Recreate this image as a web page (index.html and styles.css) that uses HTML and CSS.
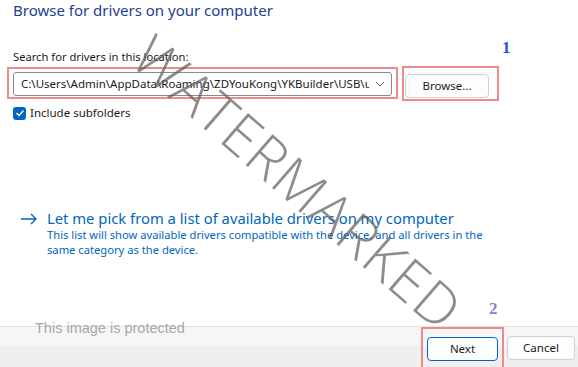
FILE: index.html
```html
<!DOCTYPE html>
<html>
<head>
<meta charset="utf-8">
<link rel="stylesheet" href="styles.css">
</head>
<body>
<div class="page">
  <div class="main">
    <h1 class="title">Browse for drivers on your computer</h1>
    <div class="label">Search for drivers in this location:</div>
    <div class="row">
      <div class="mark mark-combo">
        <div class="combo">
          <span class="combo-text">C:\Users\Admin\AppData\Roaming\ZDYouKong\YKBuilder\USB\u</span>
          <svg class="chev" width="10" height="6" viewBox="0 0 10 6"><path d="M1 1 L5 5 L9 1" fill="none" stroke="#555" stroke-width="1"/></svg>
        </div>
      </div>
      <div class="mark mark-browse">
        <button class="btn browse">Browse...</button>
      </div>
      <span class="num num1">1</span>
    </div>
    <label class="check">
      <span class="box"><svg width="10" height="8" viewBox="0 0 10 8"><path d="M1.5 4 L4 6.5 L8.5 1.5" fill="none" stroke="#fff" stroke-width="1.3"/></svg></span>
      <span>Include subfolders</span>
    </label>
    <div class="pick">
      <svg class="arrow" width="18" height="12" viewBox="0 0 18 12"><path d="M1 6 H16 M11 1 L16 6 L11 11" fill="none" stroke="#0067c0" stroke-width="1.4"/></svg>
      <div class="pick-text">
        <div class="pick-title">Let me pick from a list of available drivers on my computer</div>
        <div class="pick-desc">This list will show available drivers compatible with the device, and all drivers in the same category as the device.</div>
      </div>
    </div>
  </div>
  <div class="footer">
    <span class="protected">This image is protected</span>
    <div class="buttons">
      <div class="mark mark-next"><button class="btn next">Next</button></div>
      <button class="btn cancel">Cancel</button>
    </div>
    <span class="num num2">2</span>
  </div>
  <div class="watermark">WATERMARKED</div>
</div>
</body>
</html>
```
FILE: styles.css
```css
* { box-sizing: border-box; }
html, body { margin: 0; padding: 0; }
body {
  width: 578px;
  height: 367px;
  overflow: hidden;
  background: #fff;
  font-family: "Noto Sans", "Open Sans", sans-serif;
  color: #1a1a1a;
}
.page {
  position: relative;
  width: 578px;
  height: 367px;
  display: flex;
  flex-direction: column;
}
.main {
  flex: 1;
  padding: 0 0 0 7px;
  display: flex;
  flex-direction: column;
}
.title {
  margin: 0 0 0 6px;
  font-weight: 400;
  font-size: 15px;
  line-height: 20px;
  color: #1c3f94;
}
.label {
  margin: 29px 0 0 6px;
  font-size: 11.2px;
  line-height: 16px;
}
.row {
  position: relative;
  display: flex;
  align-items: flex-start;
  margin-top: 2px;
}
.mark {
  border: 2px solid #f08a8a;
}
.mark-combo {
  width: 391px;
  height: 32px;
  padding: 3px 4px 0 4px;
}
.combo {
  width: 379px;
  height: 24px;
  border: 1px solid #8a8a8a;
  border-radius: 3px;
  display: flex;
  align-items: center;
  padding: 0 6px 0 7px;
  overflow: hidden;
  background: #fff;
}
.combo-text {
  flex: 1;
  white-space: nowrap;
  overflow: hidden;
  text-overflow: clip;
  font-size: 11.5px;
  line-height: 16px;
}
.chev { margin-left: 6px; flex: none; }
.mark-browse {
  width: 97px;
  height: 35px;
  margin-left: 4px;
  margin-top: -1px;
  padding: 5px 0 0 1px;
}
.btn {
  font-family: "Noto Sans", "Open Sans", sans-serif;
  font-size: 11.5px;
  color: #1a1a1a;
  background: #fdfdfd;
  border: 1px solid #d0d0d0;
  border-radius: 4px;
  height: 24px;
  padding: 0;
  line-height: 16px;
}
.browse { width: 84px; }
.num {
  position: absolute;
  font-family: "Liberation Serif", serif;
  font-weight: 700;
  color: #3b4fc8;
  font-size: 17px;
}
.num1 { left: 495px; top: -29px; }
.check {
  display: flex;
  align-items: center;
  margin: 4px 0 0 6px;
  font-size: 11.5px;
  line-height: 16px;
}
.box {
  width: 13px;
  height: 13px;
  border-radius: 3px;
  background: #0067c0;
  display: flex;
  align-items: center;
  justify-content: center;
  margin-right: 4px;
}
.pick {
  display: flex;
  align-items: flex-start;
  margin: 87px 0 0 13px;
}
.arrow { margin-top: 5px; margin-right: 9px; flex: none; }
.pick-title {
  font-size: 14.8px;
  line-height: 20px;
  color: #0067c0;
}
.pick-desc {
  font-size: 11.2px;
  line-height: 15px;
  color: #0067c0;
  width: 445px;
  margin-top: -1px;
}
.footer {
  position: relative;
  height: 41px;
  border-top: 1px solid #e3e3e3;
  background: linear-gradient(#f6f6f6 0, #f6f6f6 19px, #efefef 19px);
  display: flex;
  align-items: flex-start;
}
.protected {
  position: absolute;
  left: 35px;
  top: -7px;
  font-family: "Liberation Sans", Arial, sans-serif;
  font-size: 14.5px;
  color: #a8a8a8;
}
.buttons {
  margin-left: auto;
  display: flex;
  align-items: flex-start;
  gap: 3px;
  padding-right: 3px;
}
.mark-next {
  width: 83px;
  height: 41px;
  padding: 7px 0 0 4px;
  border-bottom: none;
}
.next {
  width: 71px;
  border: 1px solid #0067c0;
}
.cancel {
  width: 68px;
  margin-top: 9px;
}
.num2 { left: 489px; top: -28px; font-size: 17px; color: #7b86d8; }
.watermark {
  position: absolute;
  left: 298px;
  top: 182px;
  font-family: "Open Sans", "Liberation Sans", sans-serif;
  font-size: 57px;
  font-weight: 300;
  line-height: 1;
  color: rgba(95,95,95,0.72);
  transform: translate(-50%, -50%) rotate(41deg);
  white-space: nowrap;
  letter-spacing: 1px;
  pointer-events: none;
}
```
